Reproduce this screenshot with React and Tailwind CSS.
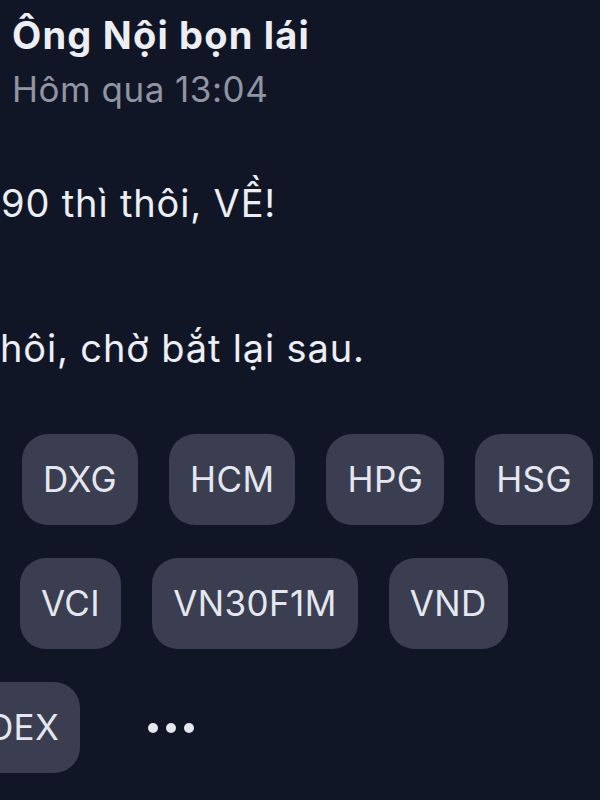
import React from 'react';

const rows = [
  { offset: 'ml-[22px]', chips: ['DXG', 'HCM', 'HPG', 'HSG'] },
  { offset: 'ml-[20px]', chips: ['VCI', 'VN30F1M', 'VND'] },
];

const Chip = ({ label }) => (
  <div className="h-[91px] shrink-0 rounded-[26px] bg-[#3a3e50] px-[21px] flex items-center text-[35px] tracking-[0.4px] text-[#e4e7ef]">
    {label}
  </div>
);

export default function App() {
  return (
    <div
      className="w-[600px] h-[800px] overflow-hidden bg-[#111626] text-[#eceef4]"
      style={{ fontFamily: 'Inter, "Noto Sans", sans-serif' }}
    >
      {/* header */}
      <div className="pl-[12px] pt-[13px]">
        <div className="text-[38px] leading-[44px] font-bold tracking-[1.2px] whitespace-nowrap">Ông Nội bọn lái</div>
        <div className="mt-[10px] text-[35px] leading-[44px] tracking-[0.5px] text-[#9094a3] whitespace-nowrap">Hôm qua 13:04</div>
      </div>

      {/* message */}
      <div className="mt-[70px] text-[38px] leading-[44px] tracking-[0.85px] whitespace-nowrap">
        <p className="ml-[1px]">90 thì thôi, VỀ!</p>
        <p className="mt-[101px]">hôi, chờ bắt lại sau.</p>
      </div>

      {/* tickers */}
      <div className="mt-[64px] flex flex-col gap-[33px]">
        {rows.map((row, i) => (
          <div key={i} className={`flex gap-[31px] ${row.offset}`}>
            {row.chips.map((c) => (
              <Chip key={c} label={c} />
            ))}
          </div>
        ))}
        <div className="flex items-center gap-[68px] -ml-[121px]">
          <Chip label="VNINDEX" />
          <div className="flex gap-[8px]">
            <span className="w-[10px] h-[10px] rounded-full bg-[#e4e7ef]" />
            <span className="w-[10px] h-[10px] rounded-full bg-[#e4e7ef]" />
            <span className="w-[10px] h-[10px] rounded-full bg-[#e4e7ef]" />
          </div>
        </div>
      </div>
    </div>
  );
}
